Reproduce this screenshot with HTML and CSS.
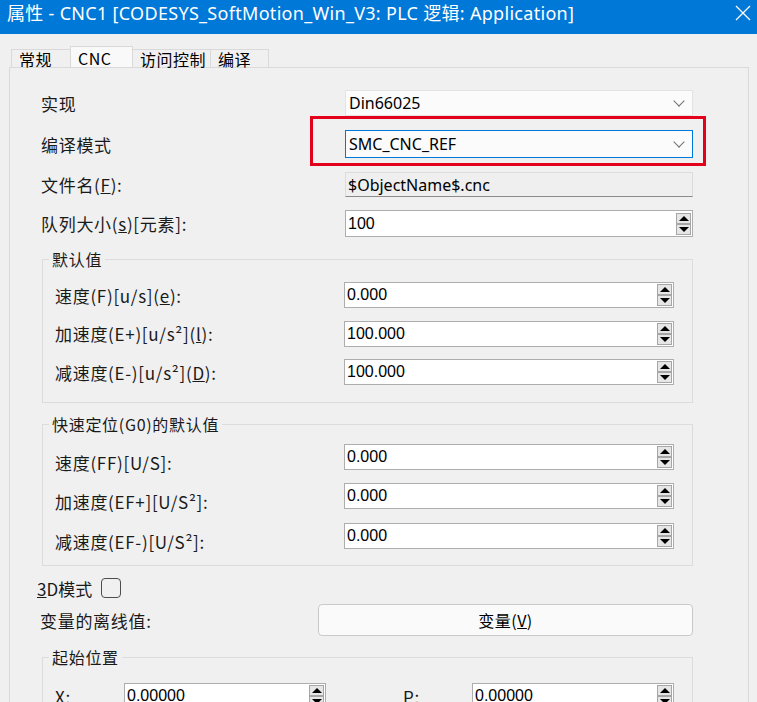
FILE: index.html
```html
<!DOCTYPE html>
<html lang="zh-CN">
<head>
  <meta charset="utf-8">
  <title>属性 - CNC1</title>
  <link rel="stylesheet" href="styles.css">
</head>
<body>

  <!-- 标题栏 -->
  <div class="titlebar">
    <span class="title">属性 - CNC1 [CODESYS_SoftMotion_Win_V3: PLC 逻辑: Application]</span>
    <svg class="close" width="16" height="16" viewBox="0 0 16 16">
      <path d="M1 1 L15 15 M15 1 L1 15" stroke="#fff" stroke-width="1.3" fill="none"/>
    </svg>
  </div>

  <!-- 选项卡 -->
  <div class="tabs">
    <div class="tab">常规</div>
    <div class="tab active">CNC</div>
    <div class="tab">访问控制</div>
    <div class="tab">编译</div>
  </div>

  <div class="panel">
    <div class="row r1">
      <span class="label">实现</span>
      <div class="combo">Din66025<span class="chev"></span></div>
    </div>
    <div class="row r2">
      <span class="label">编译模式</span>
      <div class="combo focus">SMC_CNC_REF<span class="chev"></span><div class="mark"></div></div>
    </div>
    <div class="row r3">
      <span class="label">文件名(<u>F</u>):</span>
      <div class="readonly">$ObjectName$.cnc</div>
    </div>
    <div class="row r4">
      <span class="label">队列大小(<u>s</u>)[元素]:</span>
      <div class="spin">100<span class="btns"><i class="up"></i><i class="dn"></i></span></div>
    </div>

    <fieldset class="group g1">
      <legend>默认值</legend>
      <div class="grow">
        <span class="label">速度(F)[u/s](<u>e</u>):</span>
        <div class="spin">0.000<span class="btns"><i class="up"></i><i class="dn"></i></span></div>
      </div>
      <div class="grow">
        <span class="label">加速度(E+)[u/s²](<u>l</u>):</span>
        <div class="spin">100.000<span class="btns"><i class="up"></i><i class="dn"></i></span></div>
      </div>
      <div class="grow">
        <span class="label">减速度(E-)[u/s²](<u>D</u>):</span>
        <div class="spin">100.000<span class="btns"><i class="up"></i><i class="dn"></i></span></div>
      </div>
    </fieldset>

    <fieldset class="group g2">
      <legend>快速定位(G0)的默认值</legend>
      <div class="grow">
        <span class="label low">速度(FF)[U/S]:</span>
        <div class="spin">0.000<span class="btns"><i class="up"></i><i class="dn"></i></span></div>
      </div>
      <div class="grow">
        <span class="label low">加速度(EF+][U/S²]:</span>
        <div class="spin">0.000<span class="btns"><i class="up"></i><i class="dn"></i></span></div>
      </div>
      <div class="grow">
        <span class="label low">减速度(EF-)[U/S²]:</span>
        <div class="spin">0.000<span class="btns"><i class="up"></i><i class="dn"></i></span></div>
      </div>
    </fieldset>

    <div class="check-row">
      <span class="label"><u>3</u>D模式</span>
      <span class="checkbox"></span>
    </div>

    <div class="var-row">
      <span class="label">变量的离线值:</span>
      <div class="button">变量(<u>V</u>)</div>
    </div>

    <fieldset class="group g3">
      <legend>起始位置</legend>
      <div class="pos">
        <span class="label">X:</span>
        <div class="spin">0.00000<span class="btns"><i class="up"></i><i class="dn"></i></span></div>
        <span></span>
        <span class="label">P:</span>
        <div class="spin">0.00000<span class="btns"><i class="up"></i><i class="dn"></i></span></div>
      </div>
    </fieldset>
  </div>

</body>
</html>
```

FILE: styles.css
```css
html, body {
  margin: 0;
  padding: 0;
}
body {
  width: 757px;
  height: 702px;
  overflow: hidden;
  background: #f0f0f0;
  color: #1a1a1a;
  font-family: "Noto Sans CJK SC", "Noto Sans", sans-serif;
  font-size: 16px;
}

/* 标题栏 */
.titlebar {
  height: 34px;
  background: #0078d7;
  color: #fff;
  display: flex;
  align-items: flex-start;
  padding-left: 7px;
  box-sizing: border-box;
}
.title {
  font-size: 18px;
  line-height: 26px;
  font-family: "Noto Sans", "Noto Sans CJK SC", sans-serif;
  letter-spacing: 0.3px;
  white-space: nowrap;
}
.close {
  margin-left: auto;
  margin-right: 6px;
  margin-top: 5px;
}

/* 选项卡 */
.tabs {
  display: flex;
  align-items: flex-end;
  margin-top: 13px;
  padding-left: 11px;
  height: 20px;
}
.tab {
  height: 17px;
  border: 1px solid #d9d9d9;
  border-bottom: none;
  background: #f0f0f0;
  padding: 0 7px;
  font-size: 16px;
  letter-spacing: 0.5px;
  line-height: 19px;
  color: #000;
  margin-right: -1px;
  box-sizing: content-box;
  white-space: nowrap;
}
.tab:nth-child(1) { width: 44px; }
.tab.active {
  height: 20px;
  background: #f9f9f9;
  width: 47px;
  line-height: 22px;
  position: relative;
  z-index: 1;
}
.tab:nth-child(3) { width: 63px; }
.tab:nth-child(4) { width: 43px; }

.panel {
  margin-left: 9px;
  margin-right: 8px;
  border: 1px solid #dadada;
  border-bottom: none;
  height: 640px;
  padding: 22px 55px 0 31px;
}

.row {
  display: flex;
  align-items: center;
  justify-content: space-between;
}
.r1 { height: 26px; margin-bottom: 14px; }
.r2 { height: 28px; margin-bottom: 14px; }
.r3 { height: 25px; margin-bottom: 13px; }
.r4 { height: 27px; margin-bottom: 11px; }

.label {
  white-space: nowrap;
  font-size: 17px;
  letter-spacing: 0.7px;
}
.label.low { position: relative; top: 5px; }

.combo, .readonly, .spin {
  box-sizing: border-box;
  height: 100%;
  display: flex;
  align-items: center;
  font-family: "Liberation Sans", "Noto Sans", sans-serif;
  font-size: 16px;
  color: #000;
}
.combo {
  width: 348px;
  background: #fbfbfb;
  border: 1px solid #e3e3e3;
  padding-left: 3px;
  font-family: "Noto Sans", sans-serif;
  position: relative;
}
.combo.focus {
  border-color: #0078d7;
}
.chev {
  margin-left: auto;
  margin-right: 9px;
  width: 7px;
  height: 7px;
  border-right: 1px solid #707070;
  border-bottom: 1px solid #707070;
  transform: rotate(45deg);
  margin-top: -5px;
}
.mark {
  position: absolute;
  left: -36px;
  right: -14px;
  top: -15px;
  bottom: -9px;
  border: 3px solid #e3001b;
  pointer-events: none;
}
.readonly {
  width: 348px;
  background: #efefef;
  border: 1px solid #dcdcdc;
  border-bottom-color: #8a8a8a;
  padding-left: 2px;
  font-family: "Noto Sans", sans-serif;
}
.spin {
  width: 348px;
  background: #fff;
  border: 1px solid #adadad;
  padding-left: 2px;
}
.btns {
  margin-left: auto;
  margin-right: 1px;
  width: 15px;
  display: flex;
  flex-direction: column;
}
.btns i {
  box-sizing: border-box;
  height: 11px;
  border: 1px solid #a6a6a6;
  background: #e6e6e6;
  display: flex;
  align-items: center;
  justify-content: center;
}
.btns i::after {
  content: "";
  border-left: 5px solid transparent;
  border-right: 5px solid transparent;
}
.btns i.up::after { border-bottom: 5px solid #000; }
.btns i.dn::after { border-top: 5px solid #000; }

/* 分组框 */
.group {
  margin: 0 0 0 1px;
  border: 1px solid #dcdcdc;
  padding: 12px 18px 17px 12px;
}
.group legend {
  padding: 0 3px;
  margin-left: -6px;
  line-height: 22px;
  font-size: 16px;
  letter-spacing: 0.7px;
}
.group .spin { width: 330px; }
.grow {
  display: flex;
  align-items: center;
  justify-content: space-between;
  height: 26px;
}
.grow + .grow { margin-top: 12.5px; }

.g2 { margin-top: 10px; padding-top: 9px; padding-bottom: 16px; }
.g2 .grow:nth-child(3) { margin-top: 13px; }
.g2 .grow:nth-child(4) { margin-top: 14px; }

.check-row {
  display: flex;
  align-items: center;
  height: 20px;
  margin-top: 12px;
  margin-left: -4px;
}
.check-row .label { letter-spacing: 0; }
.checkbox {
  width: 18px;
  height: 18px;
  border: 1px solid #4d4d4d;
  border-radius: 4px;
  margin-left: 9px;
}

.var-row {
  display: flex;
  align-items: center;
  justify-content: space-between;
  margin-top: 6px;
  height: 32px;
  margin-left: -1px;
}
.button {
  width: 375px;
  height: 32px;
  box-sizing: border-box;
  background: #fafafa;
  border: 1px solid #c9c9c9;
  border-radius: 4px;
  display: flex;
  align-items: center;
  justify-content: center;
  color: #000;
  font-size: 16px;
  letter-spacing: 0.5px;
}

.g3 { margin-top: 10px; padding-top: 15px; }
.pos {
  display: grid;
  grid-template-columns: 69px 202px 77px 69px 202px;
  height: 26px;
  align-items: center;
}
.pos .spin { width: 202px; }
```
